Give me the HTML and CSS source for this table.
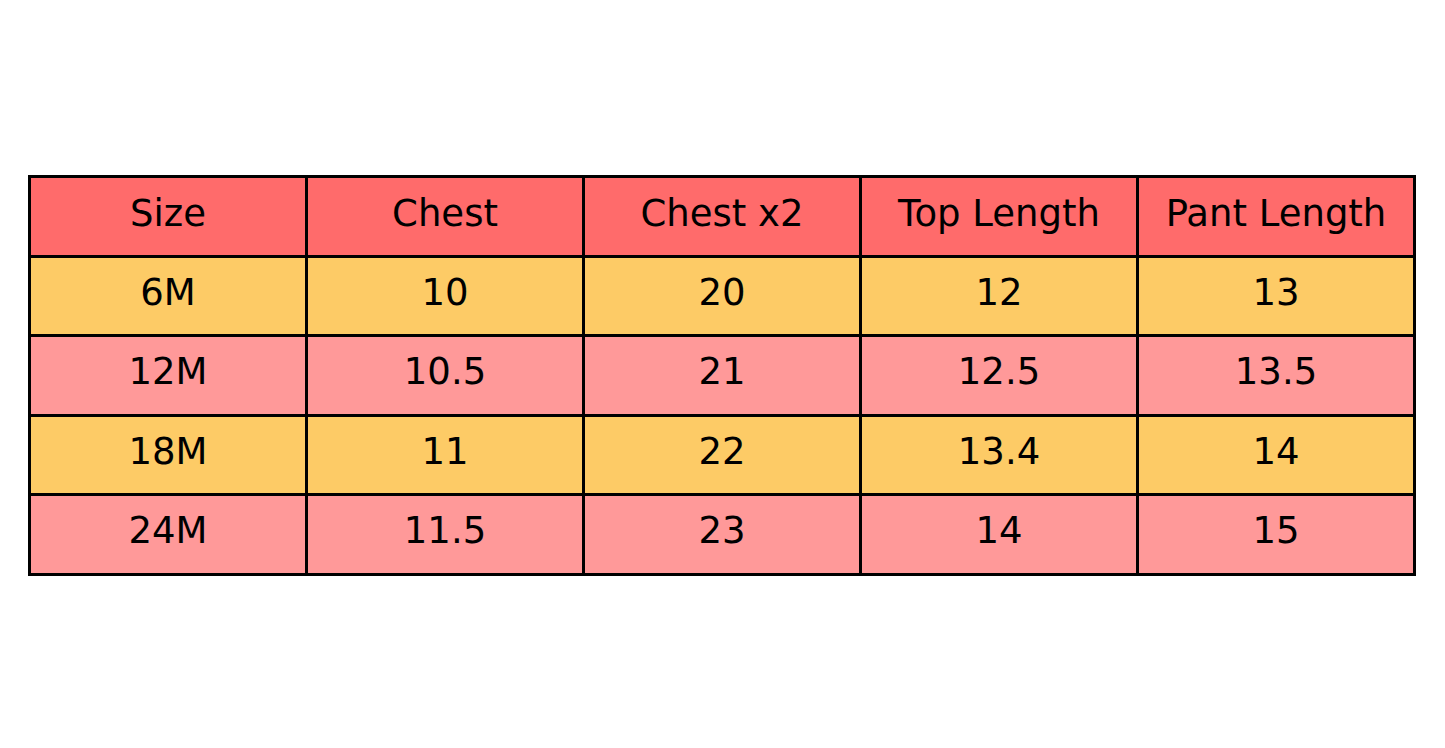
FILE: index.html
```html
<!DOCTYPE html>
<html>
<head>
<meta charset="utf-8">
<link rel="stylesheet" href="styles.css">
</head>
<body>
<div class="page">
<table class="chart">
  <tr class="head"><td>Size</td><td>Chest</td><td>Chest x2</td><td>Top Length</td><td>Pant Length</td></tr>
  <tr class="yellow"><td>6M</td><td>10</td><td>20</td><td>12</td><td>13</td></tr>
  <tr class="pink"><td>12M</td><td>10.5</td><td>21</td><td>12.5</td><td>13.5</td></tr>
  <tr class="yellow"><td>18M</td><td>11</td><td>22</td><td>13.4</td><td>14</td></tr>
  <tr class="pink"><td>24M</td><td>11.5</td><td>23</td><td>14</td><td>15</td></tr>
</table>
</div>
</body>
</html>
```

FILE: styles.css
```css
html, body {
  margin: 0;
  padding: 0;
  background: #ffffff;
}
.page {
  width: 1445px;
  height: 748px;
  padding: 175px 0 0 28px;
  box-sizing: border-box;
}
.chart {
  border-collapse: collapse;
  width: 1388px;
  table-layout: fixed;
  font-family: "DejaVu Sans", sans-serif;
  font-size: 37px;
  color: #000;
}
.chart td {
  border: 3px solid #000;
  height: 69.5px;
  padding: 0 0 7px 0;
  text-align: center;
  vertical-align: middle;
  line-height: 1;
}
.head td {
  background: #ff6b6b;
  height: 70.5px;
  padding-bottom: 6px;
}
.yellow td { background: #fdcb66; }
.pink td { background: #ff9999; }
```
